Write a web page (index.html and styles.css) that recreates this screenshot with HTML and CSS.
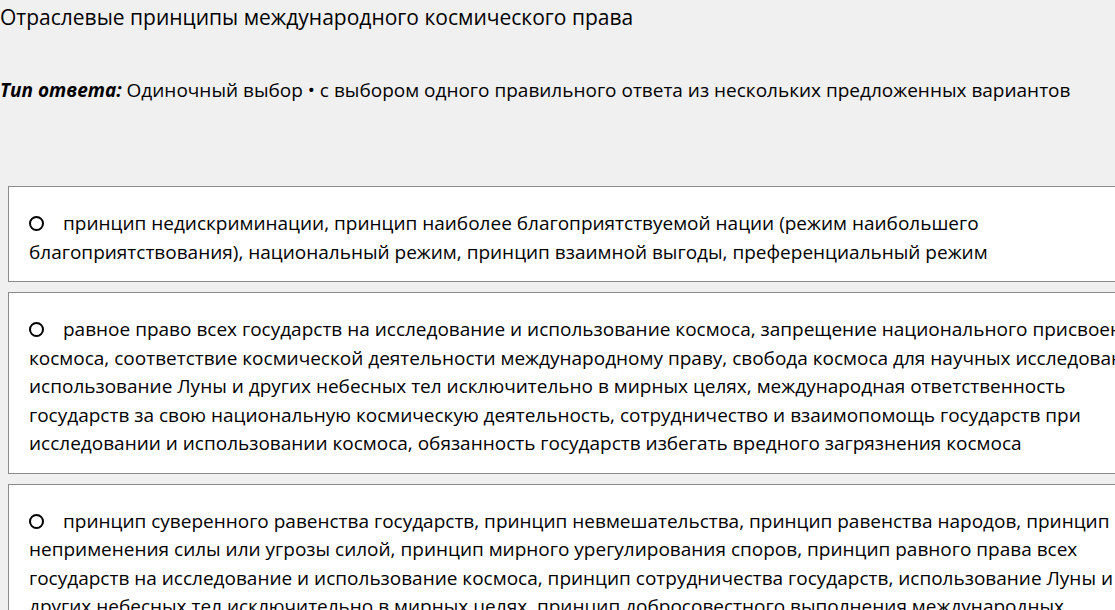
FILE: index.html
```html
<!DOCTYPE html>
<html lang="ru">
<head>
<meta charset="utf-8">
<title>Вопрос</title>
<link rel="stylesheet" href="styles.css">
</head>
<body>
<div class="question">
  <h1 class="question-title">Отраслевые принципы международного космического права</h1>
  <p class="answer-type"><em class="answer-type-label">Тип ответа:</em> Одиночный выбор • с выбором одного правильного ответа из нескольких предложенных вариантов</p>

  <div class="options">
    <label class="option">
      <span class="radio"></span>принцип недискриминации, принцип наиболее благоприятствуемой нации (режим наибольшего благоприятствования), национальный режим, принцип взаимной выгоды, преференциальный режим
    </label>
    <label class="option">
      <span class="radio"></span>равное право всех государств на исследование и использование космоса, запрещение национального присвоения космоса, соответствие космической деятельности международному праву, свобода космоса для научных исследований, использование Луны и других небесных тел исключительно в мирных целях, международная ответственность государств за свою национальную космическую деятельность, сотрудничество и взаимопомощь государств при исследовании и использовании космоса, обязанность государств избегать вредного загрязнения космоса
    </label>
    <label class="option">
      <span class="radio"></span>принцип суверенного равенства государств, принцип невмешательства, принцип равенства народов, принцип неприменения силы или угрозы силой, принцип мирного урегулирования споров, принцип равного права всех государств на исследование и использование космоса, принцип сотрудничества государств, использование Луны и других небесных тел исключительно в мирных целях, принцип добросовестного выполнения международных обязательств
    </label>
  </div>
</div>
</body>
</html>
```
FILE: styles.css
```css
html {
  overflow: hidden;
}

body {
  margin: 0;
  padding-top: 3px;
  background: #f0f0f0;
  color: #000;
  font-family: "Open Sans", "Noto Sans", sans-serif;
  font-size: 19px;
  line-height: 28.5px;
}

.question-title {
  margin: 0;
  font-size: 21px;
  font-weight: 400;
  line-height: 29px;
}

.answer-type {
  margin: 44px 0 0;
  line-height: 29px;
}

.answer-type-label {
  font-weight: 700;
  font-style: italic;
}

.options {
  margin-top: 81px;
  margin-left: 8px;
  width: 1173px;
}

.option {
  display: block;
  margin-bottom: 10px;
  padding: 22px 20px 15px;
  background: #fff;
  border: 1px solid #8c8c8c;
}

.radio {
  display: inline-block;
  box-sizing: border-box;
  width: 15px;
  height: 15px;
  margin: 0 19px 0 0;
  border: 2.5px solid #000;
  border-radius: 50%;
  vertical-align: -1px;
}
```
